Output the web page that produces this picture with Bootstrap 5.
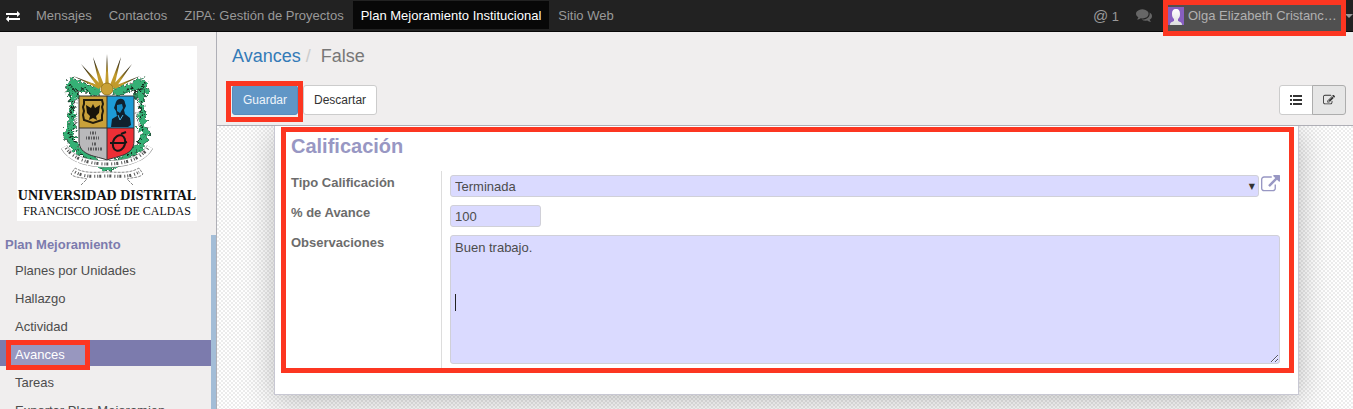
<!DOCTYPE html>
<html lang="es">
<head>
<meta charset="utf-8">
<meta name="viewport" content="width=device-width, initial-scale=1">
<title>Avances</title>
<link href="https://cdn.jsdelivr.net/npm/bootstrap@5.3.0/dist/css/bootstrap.min.css" rel="stylesheet">
<style>
  :root { --violet: #7c7bad; --mark-red: #fc3621; --panel: #f0eeee; }
  body { font-family: "Liberation Sans", Arial, sans-serif; font-size: 13px; line-height: 18px; color: #4c4c4c; background: var(--panel); }
  a { text-decoration: none; }
  svg { display: block; fill: currentColor; }

  .topbar { height: 32px; background: #222; border-bottom: 1px solid #080808; color: #999; }
  .topbar a { color: #999; }
  .topbar .menu-link { padding: 6px 8px 4px; margin: 1px 1px 2px 0; height: 28px; }
  .topbar .menu-link.active { background: #080808; color: #fff; }
  .topbar .swap { color: #fff; padding: 0 8px 0 6px; }
  .topbar .at-sign { font-size: 15px; }
  .topbar .chat { color: #666; }
  .user { width: 173px; height: 26px; background: #505050; gap: 4px; margin-top: 5px; padding-top: 2px; }
  .topbar .user { color: #b0b0b0; }
  .caret { border: 4px solid transparent; border-top-color: #999; border-bottom: 0; margin: 14px 0 0 4px; }

  /* red guide boxes drawn over the parts to look at */
  .guide { position: relative; }
  .guide::after { content: ""; position: absolute; inset: -5px; border: 5px solid var(--mark-red); pointer-events: none; z-index: 5; }

  .side { width: 217px; border-right: 1px solid #afafb6; }
  .brand { width: 180px; height: 175px; margin: 14px 0 14px 17px; background: #fff; color: #111; font-family: "Liberation Serif", "Times New Roman", serif; }
  .brand strong { font-size: 14px; line-height: 18px; }
  .brand span { font-size: 12px; line-height: 12px; }
  .side-menu { border-right: 5px solid #a3bdd7; }
  .side-menu h2 { font-size: 13px; line-height: 20px; font-weight: bold; color: var(--violet); margin: 0 0 1px; padding-left: 5px; }
  .side-menu a { color: #4c4c4c; height: 26px; line-height: 30px; padding-left: 15px; margin-bottom: 2px; }
  .side-menu a.active { background: var(--violet); color: #fff; padding-left: 11px; }
  .side-menu .guide { height: 20px; line-height: 20px; width: 74px; padding-left: 4px; margin-top: 5px; background: #9897bf; }

  .control { height: 94px; border-bottom: 1px solid #afafb6; padding: 12px 7px 0 15px; }
  .trail { font-size: 18px; line-height: 24px; color: #777; }
  .trail a { color: #337ab7; }
  .trail .slash { color: #ccc; padding: 0 10px 0 5px; }
  .actions { margin-top: 17px; gap: 5px; }
  .actions .guide::after { inset: -4px -5px -7px -6px; }
  .control .btn { font-size: 12px; line-height: 18px; height: 30px; padding: 5px 10px; border-radius: 3px; color: #333; background: #fff; border: 1px solid #ccc; }
  .control .btn-save { color: #eef4fa; background: #6096c6; border-color: #568bbc; }
  .control .btn.picked { background: #e6e6e6; border-color: #adadad; }
  .control .btn-group .btn { width: 34px; display: flex; align-items: center; justify-content: center; }
  .control .btn-group .btn:first-child { border-radius: 3px 0 0 3px; }
  .control .btn-group .btn:last-child { border-radius: 0 3px 3px 0; }

  .canvas { background: repeating-conic-gradient(#ececec 0 25%, #fff 0 50%) 0 0 / 4px 4px; padding: 0 54px 0 57px; overflow: hidden; }
  .sheet { background: #fff; border: 1px solid #c8c8d3; border-top: 0; padding: 6px 9px 26px 11px; box-shadow: 0 5px 30px rgba(0,0,0,.25); }
  .score { padding: 0 9px 0 5px; }
  .score h1 { font-size: 20px; line-height: 28px; font-weight: bold; color: #9897c3; margin: 0 0 11px; }
  .field-names { width: 150px; }
  .field-names label { font-weight: bold; color: #6c6c6c; height: 22px; line-height: 16px; }
  .field-values { padding-left: 8px; border-left: 1px solid #ddd; }
  .field-values input, .field-values select, .field-values textarea { border: 1px solid #d0d0d8; border-radius: 3px; background: #dadaff; color: #4c4c4c; font-size: 13px; line-height: 18px; padding: 2px 4px 0; outline: 0; display: block; width: 100%; height: 22px; }
  .field-values select { appearance: none; }
  .field-values input { width: 91px; padding: 1px 4px; }
  .field-values textarea { height: 129px; padding: 3px 4px; resize: vertical; }
  .picker { position: relative; }
  .picker::after { content: "▼"; position: absolute; right: 4px; top: 3px; font: 8px/18px "DejaVu Sans", sans-serif; color: #333; pointer-events: none; }
  .open-link { color: #9897c3; width: 21px; padding-left: 2px; }
  .typing { position: absolute; left: 5px; top: 59px; width: 1px; height: 17px; background: #222; }
</style>
</head>
<body class="vh-100 overflow-hidden d-flex flex-column">

<nav class="topbar d-flex flex-shrink-0" aria-label="Principal">
  <a href="#" class="swap d-flex align-items-center" aria-label="Cambiar"><svg width="14" height="14" viewBox="0 0 1792 1792"><path d="M1792 1184v192q0 13-9.5 22.5t-22.5 9.5h-1376v192q0 13-9.5 22.5t-22.5 9.5q-12 0-24-10l-319-320q-9-9-9-22 0-14 9-23l320-320q9-9 23-9 13 0 22.500 9.500t9.500 22.500v192h1376q13 0 22.500 9.500t9.500 22.500zm0-544q0 14-9 23l-320 320q-9 9-23 9-13 0-22.500-9.500t-9.500-22.500v-192h-1376q-13 0-22.500-9.500t-9.500-22.500v-192q0-13 9.500-22.500t22.500-9.500h1376v-192q0-14 9-23t23-9q12 0 24 10l319 319q9 9 9 23z"/></svg></a>
  <a href="#" class="menu-link">Mensajes</a>
  <a href="#" class="menu-link">Contactos</a>
  <a href="#" class="menu-link">ZIPA: Gestión de Proyectos</a>
  <a href="#" class="menu-link active" aria-current="page">Plan Mejoramiento Institucional</a>
  <a href="#" class="menu-link">Sitio Web</a>
  <div class="d-flex ms-auto">
    <a href="#" class="menu-link text-nowrap"><span class="at-sign">@</span> 1</a>
    <a href="#" class="menu-link chat me-2" aria-label="Conversaciones"><svg width="16" height="16" viewBox="0 0 1792 1792"><path d="M1408 768q0 139-94 257t-256.500 186.500-353.500 68.500q-86 0-176-16-124 88-278 128-36 9-86 16h-3q-11 0-20.500-8t-11.500-21q-1-3-1-6.500t.5-6.500 2-6l2.500-5 3.500-5.500 4-5 4.500-5 4-4.500q5-6 23-25t26-29.500 22.500-29 25-38.500 20.500-44q-124-72-195-177t-71-224q0-139 94-257t256.500-186.500 353.500-68.500 353.500 68.500 256.500 186.500 94 257zm384 256q0 120-71 224.500t-195 176.500q10 24 20.500 44t25 38.500 22.500 29 26 29.500 23 25q1 1 4 4.500t4.500 5 4 5 3.500 5.500l2.500 5 2 6 .5 6.500-1 6.500q-3 14-13 22t-22 7q-50-7-86-16-154-40-278-128-90 16-176 16-271 0-472-132 58 4 88 4 161 0 309-45t264-129q125-92 192-212t67-254q0-77-23-152 129 71 204 178t75 230z" fill="#666"/></svg></a>
    <a href="#" class="user guide d-flex">
      <svg width="16" height="18" viewBox="0 0 16 18"><defs><linearGradient id="face" x2="0" y2="1"><stop stop-color="#fff"/><stop offset="1" stop-color="#ddd"/></linearGradient></defs><rect width="16" height="18" fill="#875fc0"/><path d="M8 2c3 0 4 2 4 5 0 3-1 4-2 5v2c2 1 4 1 4 4H2c0-3 2-3 4-4v-2C5 11 4 10 4 7c0-3 1-5 4-5z" fill="url(#face)"/></svg>
      <span class="text-nowrap">Olga Elizabeth Cristanc…</span>
    </a>
    <span class="caret align-self-start"></span>
  </div>
</nav>

<div class="d-flex flex-grow-1 overflow-hidden">
  <aside class="side flex-shrink-0">
    <div class="brand d-flex flex-column align-items-center">
      <svg width="180" height="141" viewBox="0 0 180 141" role="img" aria-label="Escudo">
        <defs>
          <filter id="leafy" x="-10%" y="-10%" width="120%" height="120%"><feTurbulence type="fractalNoise" baseFrequency=".3" numOctaves="2" seed="4"/><feDisplacementMap in="SourceGraphic" scale="9" xChannelSelector="R" yChannelSelector="G"/></filter>
          <radialGradient id="ray" gradientUnits="userSpaceOnUse" cx="90" cy="43" r="36"><stop offset=".45" stop-color="#c19a2b"/><stop offset=".85" stop-color="#2b240f"/></radialGradient>
        </defs>
        <!-- leaves -->
        <g fill="none" stroke-linecap="round" stroke-linejoin="round" filter="url(#leafy)">
          <path d="M80 46l-8-3-9-3-8-3-2 8 5 5M100 46l8-3 9-3 8-3 2 8-5 5" stroke="#1b2e22" stroke-width="9"/>
          <path d="M80 46l-8-3-9-3-8-3-2 8 5 5M100 46l8-3 9-3 8-3 2 8-5 5" stroke="#35b074" stroke-width="8"/>
          <path d="M56 46l1 12-2 13 1 9-6 8 4 5 4 9 9 5 8 8 8 3 7 4 7-4 8-3 8-8 9-5 4-9 4-5-6-8 1-9-2-13 1-12" stroke="#1b2e22" stroke-width="8"/>
          <path d="M56 46l1 12-2 13 1 9-6 8 4 5 4 9 9 5 8 8 8 3 7 4 7-4 8-3 8-8 9-5 4-9 4-5-6-8 1-9-2-13 1-12" stroke="#35b074" stroke-width="7"/>
          <path d="M53 39l6 7 8-4 6 5M53 54l5 5-5 9 6 8-7 12 7 8M127 39l-6 7-8-4-6 5M127 54l-5 5 5 9-6 8 7 12-7 8M60 104l8 7 9 6M120 104l-8 7-9 6" stroke="#14261b" stroke-width="1.500" stroke-dasharray="2 3"/>
          <path d="M60 55l-1 8 2 6-2 9M120 55l1 8-2 6 2 9" stroke="#fff" stroke-width="4"/>
          <path d="M60 53l-3 10 4 6-3 10M120 53l3 10-4 6 3 10" stroke="#444" stroke-width="1" stroke-dasharray="2 2"/>
        </g>
        <!-- rays and sun -->
        <g fill="url(#ray)">
          <path d="M88 42L90 8l2 34zM83 42L76 11l11 28zM97 42l7-31-11 28zM82 43L64 18l20 21zM98 43l17-25-19 21zM82 43L56 30l27 10zM98 43l25-13-26 10z"/>
          <circle cx="90" cy="43" r="6" fill="#c9a136" stroke="#9a7920" stroke-width="1"/>
        </g>
        <!-- shield -->
        <path d="M62 50h28v32H62z" fill="#c9a13a"/>
        <path d="M90 50h27v32H90z" fill="#1d9bd7"/>
        <path d="M62 82h28v32c-10-4-28-4-28-19z" fill="#b9b9bb"/>
        <path d="M90 82h27v13c0 15-17 15-27 19z" fill="#ed2f36"/>
        <path d="M62 50h55v45c0 15-17 15-27 19-10-4-28-4-28-19zM90 50v64M62 82h55" fill="none" stroke="#333" stroke-width="1"/>
        <path d="M67 54h18l1 4-1 3 1 4-1 4v5l-9 3-9-3-1-5 1-4-1-4 1-3z" fill="none" stroke="#221c0c" stroke-width="2"/>
        <path d="M76 58l2 4 5-3-1 8-3 3 1 4-4-2-4 2 1-4-3-3-1-8 5 3z" fill="#17130a"/>
        <path d="M99 56c2-5 9-4 9 1l1 3-2 4 1 4 5 4 1 7-3 2H94l1-8 5-3-1-5-2-3z" fill="#10212e"/>
        <path d="M100 59l5-1 1 4-3 5-3-2z" fill="#1688c0"/>
        <path d="M101 69l2 5 3-5" fill="none" stroke="#46b2e2"/>
        <g fill="none" stroke="#161616">
          <ellipse cx="102" cy="97" rx="6" ry="8" stroke-width="2" transform="rotate(18 102 97)"/>
          <path d="M93 97h14l3-1M104 88l5-2" stroke-width="2"/>
          <path d="M73 87h7M69 92h13M75 98h4M71 103h15" stroke-width="3" stroke-dasharray="1 1 2 1" stroke="#5b5b5d"/>
        </g>
        <!-- ribbons -->
        <g fill="none">
          <path d="M47 101c8 14 28 17 43 17s35-3 43-17" stroke="#888" stroke-width="7" stroke-dasharray="9 1"/>
          <path d="M47 101c8 14 28 17 43 17s35-3 43-17" stroke="#fff" stroke-width="6"/>
          <path d="M49 102c9 13 27 16 41 16s32-3 41-16" stroke="#555" stroke-width="3" stroke-dasharray="1 2 1 1 2 3"/>
          <path d="M64 139l6-6c-6-2-13-1-16-5l4-6c10 6 21 4 32 4s22 2 32-4l4 6c-3 4-10 3-16 5l6 6" fill="#fff" stroke="#888" stroke-width="1" stroke-dasharray="3 1"/>
          <path d="M58 126c10 6 21 4 32 4s22 2 32-4" stroke="#555" stroke-width="3" stroke-dasharray="1 2 1 1 2 3"/>
        </g>
      </svg>
      <strong class="text-nowrap">UNIVERSIDAD DISTRITAL</strong>
      <span class="text-nowrap">FRANCISCO JOSÉ DE CALDAS</span>
    </div>
    <nav class="side-menu d-flex flex-column" aria-label="Plan Mejoramiento">
      <h2>Plan Mejoramiento</h2>
      <a href="#">Planes por Unidades</a>
      <a href="#">Hallazgo</a>
      <a href="#">Actividad</a>
      <a href="#" class="active d-flex"><span class="guide">Avances</span></a>
      <a href="#">Tareas</a>
      <a href="#">Exportar Plan Mejoramien</a>
    </nav>
  </aside>

  <main class="flex-grow-1 d-flex flex-column overflow-hidden">
    <header class="control flex-shrink-0">
      <div class="trail"><a href="#">Avances</a><span class="slash">/</span>False</div>
      <div class="actions d-flex">
        <span class="guide d-inline-flex"><button type="button" class="btn btn-save">Guardar</button></span>
        <button type="button" class="btn">Descartar</button>
        <div class="btn-group ms-auto">
          <button type="button" class="btn" aria-label="Lista"><svg width="12" height="12" viewBox="0 0 12 12"><path d="M0 1h2v2H0zM3 1h9v2H3zM0 5h2v2H0zM3 5h9v2H3zM0 9h2v2H0zM3 9h9v2H3z"/></svg></button>
          <button type="button" class="btn picked" aria-label="Formulario"><svg width="12" height="12" viewBox="0 0 1792 1792"><path d="M888 1184l116-116-152-152-116 116v56h96v96h56zm440-720q-16-16-33 1l-350 350q-17 17-1 33t33-1l350-350q17-17 1-33zm80 594v190q0 119-84.500 203.500t-203.500 84.500h-832q-119 0-203.500-84.500t-84.500-203.500v-832q0-119 84.500-203.500t203.500-84.500h832q63 0 117 25 15 7 18 23 3 17-9 29l-49 49q-14 14-32 8-23-6-45-6h-832q-66 0-113 47t-47 113v832q0 66 47 113t113 47h832q66 0 113-47t47-113v-126q0-13 9-22l64-64q15-15 35-7t20 29zm-96-738l288 288-672 672h-288v-288zm444 132l-92 92-288-288 92-92q28-28 68-28t68 28l152 152q28 28 28 68t-28 68z"/></svg></button>
        </div>
      </div>
    </header>

    <div class="canvas flex-grow-1">
      <form class="sheet">
        <section class="guide score">
          <h1>Calificación</h1>
          <div class="d-flex">
            <div class="field-names d-flex flex-column gap-2 pt-1">
              <label for="kind">Tipo Calificación</label>
              <label for="pct">% de Avance</label>
              <label for="notes">Observaciones</label>
            </div>
            <div class="field-values d-flex flex-column flex-grow-1 gap-2 py-1">
              <div class="d-flex">
                <div class="picker flex-grow-1"><select id="kind"><option>Terminada</option></select></div>
                <a href="#" class="open-link" aria-label="Abrir registro"><svg width="19" height="19" viewBox="0 0 1792 1792"><path d="M1408 928v320q0 119-84.500 203.500t-203.500 84.500h-832q-119 0-203.500-84.500t-84.500-203.500v-832q0-119 84.500-203.500t203.500-84.500h704q14 0 23 9t9 23v64q0 14-9 23t-23 9h-704q-66 0-113 47t-47 113v832q0 66 47 113t113 47h832q66 0 113-47t47-113v-320q0-14 9-23t23-9h64q14 0 23 9t9 23zm384-864v512q0 26-19 45t-45 19-45-19l-176-176-652 652q-10 10-23 10t-23-10l-114-114q-10-10-10-23t10-23l652-652-176-176q-19-19-19-45t19-45 45-19h512q26 0 45 19t19 45z"/></svg></a>
              </div>
              <input id="pct" type="text" value="100">
              <div class="position-relative">
                <textarea id="notes">Buen trabajo.</textarea>
                <span class="typing"></span>
              </div>
            </div>
          </div>
        </section>
      </form>
    </div>
  </main>
</div>

<script src="https://cdn.jsdelivr.net/npm/bootstrap@5.3.0/dist/js/bootstrap.bundle.min.js"></script>
</body>
</html>
